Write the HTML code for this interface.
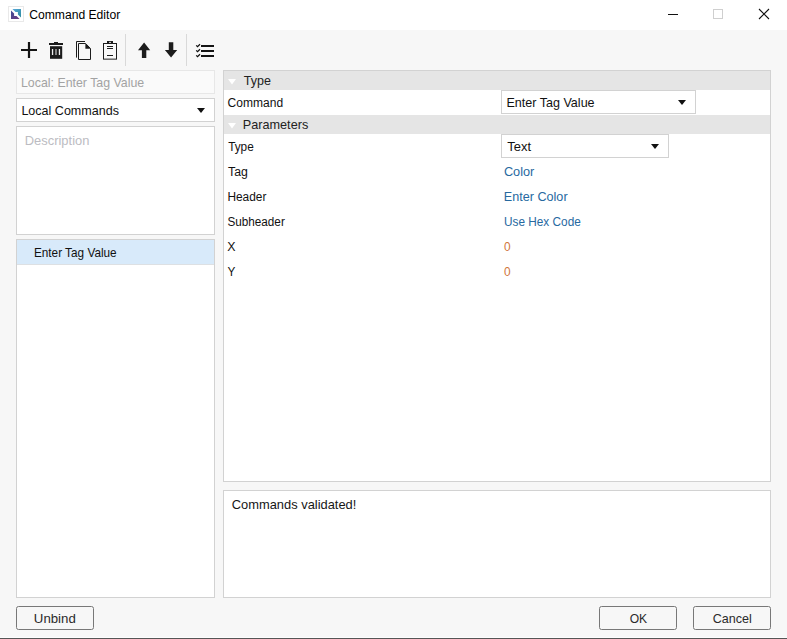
<!DOCTYPE html>
<html lang="en"><head><meta charset="utf-8"><title>Command Editor</title>
<style>
html,body{margin:0;padding:0}
body{width:787px;height:639px;position:relative;overflow:hidden;background:#f7f7f7;font-family:"Liberation Sans", sans-serif;}
.abs{position:absolute}
.t{position:absolute;white-space:nowrap;line-height:1;transform-origin:0 0;display:block}
.box{position:absolute;box-sizing:border-box;background:#fff;border:1px solid #d2d2d2}
.btn{position:absolute;box-sizing:border-box;border:1px solid #787878;border-radius:2.5px;background:#f7f7f7}
svg{position:absolute;overflow:visible}
</style></head><body>
<!-- title bar -->
<div class="abs" style="left:0;top:0;width:787px;height:30px;background:#fff"></div>
<!-- app icon -->
<svg style="left:8px;top:6px" width="16" height="16" viewBox="0 0 16 16">
 <defs>
  <linearGradient id="ga" x1="0" y1="0" x2="1" y2="1"><stop offset="0" stop-color="#58a8da"/><stop offset="1" stop-color="#2b8a9c"/></linearGradient>
  <linearGradient id="gb" x1="0" y1="0" x2="1" y2="1"><stop offset="0" stop-color="#3f4c96"/><stop offset="1" stop-color="#6e3a7e"/></linearGradient>
 </defs>
 <rect x="0.5" y="0.5" width="15" height="15" fill="#fff" stroke="#e9e9e9"/>
 <path d="M4.4 3 H13 V11.6 L9.9 8.5 V6.1 H7.5 Z" fill="url(#ga)"/>
 <path d="M3 4.4 V13 H11.6 L8.5 9.9 H6.1 V7.5 Z" fill="url(#gb)"/>
</svg>
<!-- window controls -->
<svg style="left:660px;top:0" width="127" height="30" viewBox="0 0 127 30">
 <path d="M8 14.5 H18" stroke="#111" stroke-width="1" fill="none"/>
 <rect x="53.5" y="9.5" width="9" height="9" stroke="#cfcfcf" stroke-width="1" fill="none"/>
 <path d="M99 9 L109 19 M109 9 L99 19" stroke="#111" stroke-width="1.1" fill="none"/>
</svg>
<!-- toolbar icons -->
<svg style="left:0;top:30px" width="240" height="40" viewBox="0 30 240 40">
 <!-- plus -->
 <path d="M21 50 H37 M29 42 V58" stroke="#141414" stroke-width="2.2" fill="none"/>
 <!-- trash -->
 <rect x="54" y="42" width="4" height="1.4" fill="#1c1c1c"/>
 <rect x="49" y="43" width="14" height="2" fill="#1c1c1c"/>
 <rect x="50" y="46.2" width="12.2" height="12.6" fill="#1c1c1c"/>
 <rect x="51.9" y="49" width="1.3" height="6" fill="#f0f0f0"/>
 <rect x="55.3" y="49" width="1.4" height="6" fill="#b0b0b0"/>
 <rect x="58.8" y="49" width="1.3" height="6" fill="#f0f0f0"/>
 <!-- copy -->
 <path d="M85 41.5 H76.5 V57.6" stroke="#1c1c1c" stroke-width="1" fill="none"/>
 <path d="M78.5 43.5 H85.6 L90.5 48.5 V59.5 H78.5 Z" stroke="#1c1c1c" stroke-width="1" fill="#f8f8f8"/>
 <path d="M85.4 43.5 L90.5 48.7 H85.4 Z" fill="#1c1c1c"/>
 <!-- clipboard -->
 <rect x="103.5" y="43.5" width="13" height="15.5" stroke="#1c1c1c" stroke-width="1" fill="#f8f8f8"/>
 <rect x="104" y="58" width="12" height="1" fill="#a8a8a8"/>
 <rect x="103" y="59" width="14" height="0.9" fill="#6c6c6c"/>
 <rect x="107" y="41" width="6" height="2.6" fill="#1c1c1c"/>
 <rect x="109" y="41.9" width="2" height="0.9" fill="#e8e8e8"/>
 <path d="M107 46.5 H113 M107 48.5 H113 M107 55.5 H113" stroke="#1c1c1c" stroke-width="1" fill="none"/>
 <!-- sep -->
 <rect x="125" y="34" width="1" height="32" fill="#d9d9d9"/>
 <!-- up arrow -->
 <path d="M144.1 42.6 L150.2 50.3 H146.3 V57.9 H141.9 V50.3 H138 Z" fill="#1c1c1c"/>
 <!-- down arrow -->
 <path d="M171.05 57.6 L177.2 49.9 H173.3 V42.3 H168.8 V49.9 H164.9 Z" fill="#1c1c1c"/>
 <!-- sep -->
 <rect x="186" y="34" width="1" height="32" fill="#d9d9d9"/>
 <!-- checklist -->
 <path d="M201 46 H214 M201 51 H214 M201 56 H214" stroke="#141414" stroke-width="2" fill="none"/>
 <path d="M196.2 45.4 L197.5 46.6 L200 44.2 M196.2 50.4 L197.5 51.6 L200 49.2 M196.2 55.4 L197.5 56.6 L200 54.2" stroke="#0c0c0c" stroke-width="1.25" fill="none"/>
</svg>
<!-- left column -->
<div class="box" style="left:16px;top:70px;width:199px;height:24px;background:#fafafa;border-color:#e7e7e7"></div>
<div class="box" style="left:16px;top:98px;width:199px;height:24px"></div>
<svg style="left:197px;top:108px" width="8" height="5" viewBox="0 0 8 5"><path d="M0 0 H8 L4 5 Z" fill="#111"/></svg>
<div class="box" style="left:16px;top:126px;width:199px;height:109px"></div>
<div class="box" style="left:16px;top:239px;width:199px;height:359px"></div>
<div class="abs" style="left:17px;top:240px;width:197px;height:24px;background:#d8eafa"></div>
<div class="abs" style="left:17px;top:264px;width:197px;height:1px;background:#dde0e3"></div>
<!-- right panel -->
<div class="box" style="left:223px;top:70px;width:548px;height:412px"></div>
<div class="abs" style="left:224px;top:71px;width:546px;height:19px;background:#e5e5e5"></div>
<div class="abs" style="left:224px;top:115px;width:546px;height:19px;background:#e5e5e5"></div>
<svg style="left:228px;top:78.5px" width="8" height="5.5" viewBox="0 0 8 5.5"><path d="M0 0 H8 L4 5.5 Z" fill="#fff"/></svg>
<svg style="left:228px;top:122.5px" width="8" height="5.5" viewBox="0 0 8 5.5"><path d="M0 0 H8 L4 5.5 Z" fill="#fff"/></svg>
<div class="box" style="left:501px;top:90px;width:195px;height:24px"></div>
<svg style="left:678px;top:100px" width="8" height="5" viewBox="0 0 8 5"><path d="M0 0 H8 L4 5 Z" fill="#111"/></svg>
<div class="box" style="left:501px;top:134px;width:168px;height:24px"></div>
<svg style="left:651px;top:144px" width="8" height="5" viewBox="0 0 8 5"><path d="M0 0 H8 L4 5 Z" fill="#111"/></svg>
<!-- log -->
<div class="box" style="left:223px;top:490px;width:548px;height:108px"></div>
<!-- buttons -->
<div class="btn" style="left:16px;top:606px;width:78px;height:24px"></div>
<div class="btn" style="left:599px;top:606px;width:78px;height:24px"></div>
<div class="btn" style="left:693px;top:606px;width:78px;height:24px"></div>
<!-- bottom edge -->
<div class="abs" style="left:0;top:638px;width:787px;height:1px;background:#555"></div>
<div class="abs" style="left:0;top:637px;width:787px;height:1px;background:#fdfdfd"></div>

<span class="t" style="left:29.70px;top:9.00px;font-size:12px;color:#000;transform:translate(-0.84px,0.00px) scaleX(1.0115);">Command Editor</span>
<span class="t" style="left:21.90px;top:76.70px;font-size:12.6px;color:#a3a3a3;transform:translate(-1.01px,0.00px) scaleX(0.9816);">Local: Enter Tag Value</span>
<span class="t" style="left:22.40px;top:105.10px;font-size:12.8px;color:#111;transform:translate(-0.60px,-0.40px) scaleX(0.9793);">Local Commands</span>
<span class="t" style="left:25.80px;top:134.70px;font-size:12.6px;color:#bcbcc2;transform:translate(-1.23px,0.00px) scaleX(1.0257);">Description</span>
<span class="t" style="left:34.90px;top:248.05px;font-size:11.9px;color:#111;transform:translate(-1.11px,-0.20px) scaleX(0.9912);">Enter Tag Value</span>
<span class="t" style="left:244.00px;top:74.70px;font-size:12.6px;color:#222;transform:translate(-0.22px,0.00px) scaleX(0.9935);">Type</span>
<span class="t" style="left:228.20px;top:97.00px;font-size:12px;color:#111;transform:translate(-0.38px,0.00px) scaleX(1.0021);">Command</span>
<span class="t" style="left:243.70px;top:118.70px;font-size:12.6px;color:#222;transform:translate(-1.27px,-0.20px) scaleX(1.0066);">Parameters</span>
<span class="t" style="left:228.40px;top:141.00px;font-size:12px;color:#111;transform:translate(0.14px,-0.20px) scaleX(0.9846);">Type</span>
<span class="t" style="left:228.30px;top:166.00px;font-size:12px;color:#111;transform:translate(-0.02px,-0.20px) scaleX(1.0248);">Tag</span>
<span class="t" style="left:228.30px;top:191.00px;font-size:12px;color:#111;transform:translate(-0.59px,-0.20px) scaleX(0.9904);">Header</span>
<span class="t" style="left:228.10px;top:216.00px;font-size:12px;color:#111;transform:translate(-0.62px,-0.20px) scaleX(0.9778);">Subheader</span>
<span class="t" style="left:227.90px;top:241.00px;font-size:12px;color:#111;transform:translate(-0.72px,-0.10px) scaleX(1.0294);">X</span>
<span class="t" style="left:227.90px;top:266.00px;font-size:12px;color:#111;transform:translate(-0.57px,-0.10px) scaleX(0.9817);">Y</span>
<span class="t" style="left:507.50px;top:96.65px;font-size:12.7px;color:#111;transform:translate(-1.54px,0.00px) scaleX(0.9890);">Enter Tag Value</span>
<span class="t" style="left:507.50px;top:140.70px;font-size:12.6px;color:#111;transform:translate(-0.74px,-0.20px) scaleX(1.0284);">Text</span>
<span class="t" style="left:504.60px;top:165.70px;font-size:12.6px;color:#27699f;transform:translate(-1.11px,-0.20px) scaleX(1.0117);">Color</span>
<span class="t" style="left:504.80px;top:190.70px;font-size:12.6px;color:#27699f;transform:translate(-1.20px,-0.20px) scaleX(1.0013);">Enter Color</span>
<span class="t" style="left:504.80px;top:215.70px;font-size:12.6px;color:#27699f;transform:translate(-1.03px,-0.20px) scaleX(0.9378);">Use Hex Code</span>
<span class="t" style="left:504.50px;top:240.80px;font-size:12.4px;color:#d1763c;transform:translate(-0.96px,0.00px) scaleX(0.9599);">0</span>
<span class="t" style="left:504.50px;top:265.80px;font-size:12.4px;color:#d1763c;transform:translate(-0.96px,0.00px) scaleX(0.9599);">0</span>
<span class="t" style="left:232.50px;top:498.70px;font-size:12.6px;color:#161616;transform:translate(-1.22px,0.00px) scaleX(1.0225);">Commands validated!</span>
<span class="t" style="left:34.80px;top:612.70px;font-size:12.6px;color:#2a2a2a;transform:translate(-1.17px,-0.20px) scaleX(1.0507);">Unbind</span>
<span class="t" style="left:630.30px;top:612.70px;font-size:12.6px;color:#2a2a2a;transform:translate(-0.31px,0.00px) scaleX(0.9607);">OK</span>
<span class="t" style="left:713.30px;top:612.70px;font-size:12.6px;color:#2a2a2a;transform:translate(-0.30px,0.00px) scaleX(0.9965);">Cancel</span>
</body></html>
